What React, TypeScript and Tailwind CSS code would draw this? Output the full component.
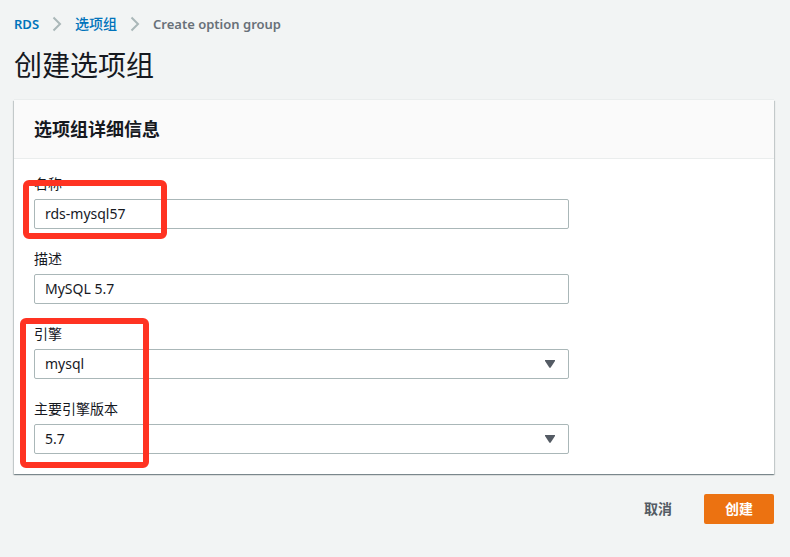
import { useState } from "react";
import type { ReactNode } from "react";

function Separator() {
  return (
    <svg className="mx-3 h-4 w-3 shrink-0" viewBox="0 0 12 16" fill="none" stroke="#aab7b8" strokeWidth="2" aria-hidden="true">
      <path d="M2.5 1.5 9 8l-6.5 6.5" />
    </svg>
  );
}

function Field({ id, label, children }: { id: string; label: string; children: ReactNode }) {
  return (
    <div className="flex flex-col gap-[5px]">
      <label htmlFor={id} className="text-sm leading-5">
        {label}
      </label>
      {children}
    </div>
  );
}

const controlClass =
  "h-[30px] w-full rounded-xs border border-[#aab7b8] bg-white px-2.5 text-sm leading-5 text-[#16191f] outline-none focus:border-[#00a1c9]";

function TextField({ id, label, initial }: { id: string; label: string; initial: string }) {
  const [value, setValue] = useState(initial);
  return (
    <Field id={id} label={label}>
      <input id={id} type="text" value={value} onChange={(e) => setValue(e.target.value)} className={`${controlClass} pb-0.5`} />
    </Field>
  );
}

function SelectField({ id, label, options }: { id: string; label: string; options: string[] }) {
  return (
    <Field id={id} label={label}>
      <div className="relative">
        <select id={id} defaultValue={options[0]} className={`${controlClass} appearance-none pr-9`}>
          {options.map((option) => (
            <option key={option}>{option}</option>
          ))}
        </select>
        <svg className="pointer-events-none absolute top-[11px] right-[13px] h-2 w-3" viewBox="0 0 12 8" aria-hidden="true">
          <path d="M1 0h10v1L6.7 7.6q-.7.7-1.4 0L1 1z" fill="#545b64" />
        </svg>
      </div>
    </Field>
  );
}

export default function App() {
  return (
    <div className="min-h-screen bg-[#f2f4f4] pt-3 pr-4 pb-8 pl-3.5 font-['Noto_Sans','Noto_Sans_CJK_SC',sans-serif] text-[#16191f]">
      <nav aria-label="Breadcrumb" className="flex h-6 items-center text-[13px] leading-6 font-semibold">
        <a href="#rds" className="text-[#0073bb] hover:underline">RDS</a>
        <Separator />
        <a href="#option-groups" className="text-sm leading-6 font-medium text-[#0073bb] hover:underline">选项组</a>
        <Separator />
        <span className="text-[#687078]">Create option group</span>
      </nav>
      <h1 className="mt-3 text-[28px] leading-[34px]">创建选项组</h1>

      <form onSubmit={(e) => e.preventDefault()}>
        <section className="mt-[18px] bg-white shadow-[0_1px_1px_0_rgba(0,28,36,0.3),1px_1px_1px_0_rgba(0,28,36,0.15),-1px_1px_1px_0_rgba(0,28,36,0.15),0_-1px_0_0_#eaeded]">
          <header className="border-b border-[#eaeded] bg-[#fafafa] px-5 py-[18px]">
            <h2 className="text-lg leading-[22px] font-bold">选项组详细信息</h2>
          </header>
          <div className="px-5 pt-[15px] pb-5">
            <div className="flex max-w-[535px] flex-col gap-5">
              <div className="relative">
                <TextField id="name" label="名称" initial="rds-mysql57" />
                <div className="pointer-events-none absolute top-1.5 -bottom-2.5 -left-[11px] w-36 rounded-md border-6 border-[#ff3322]" />
              </div>
              <TextField id="description" label="描述" initial="MySQL 5.7" />
              <div className="relative flex flex-col gap-5">
                <SelectField id="engine" label="引擎" options={["mysql", "mariadb", "oracle-ee", "sqlserver-se"]} />
                <SelectField id="version" label="主要引擎版本" options={["5.7", "5.6", "8.0"]} />
                <div className="pointer-events-none absolute -top-1.5 -bottom-3.5 -left-3.5 w-[129px] rounded-md border-6 border-[#ff3322]" />
              </div>
            </div>
          </div>
        </section>

        <div className="mt-5 flex justify-end gap-3 text-sm leading-5 font-bold">
          <button type="button" className="h-[30px] rounded-xs px-5 text-[#545b64]">取消</button>
          <button type="submit" className="h-[30px] rounded-xs bg-[#ec7211] px-[21px] text-white">创建</button>
        </div>
      </form>
    </div>
  );
}
